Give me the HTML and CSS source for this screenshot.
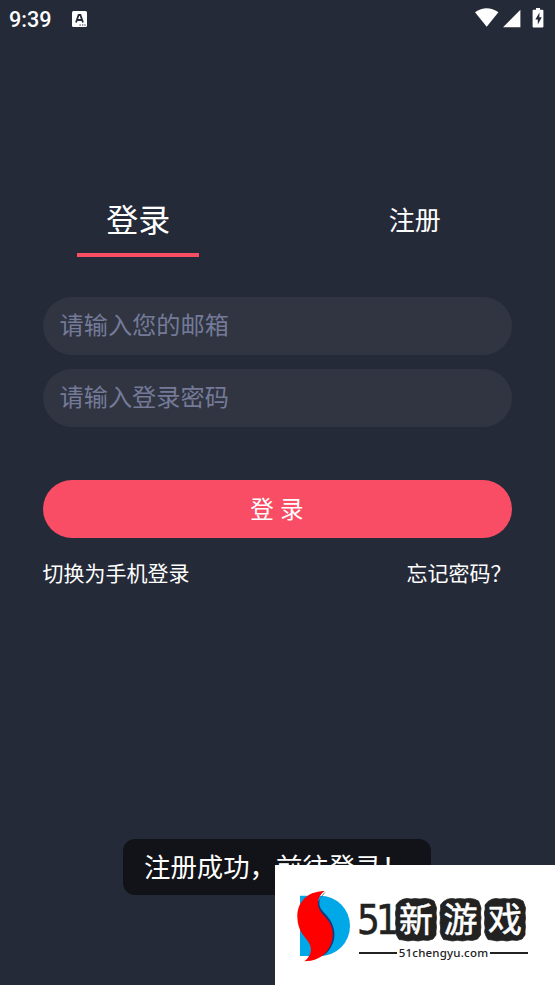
FILE: index.html
```html
<!DOCTYPE html>
<html lang="zh-CN">
<head>
<meta charset="utf-8">
<title>登录</title>
<link rel="stylesheet" href="styles.css">
</head>
<body>
<div class="screen">
  <header class="status">
    <span class="time">9:39</span>
    <svg class="ime" width="15" height="16" viewBox="0 0 15 16"><rect width="15" height="16" rx="1.5" fill="#fff"/><path d="M4 11.5 6.6 4h1.8L11 11.5M5.2 9h4.6" fill="none" stroke="#252a38" stroke-width="1.8"/><path d="M7.5 14h1.3M10 14h1.3M12.3 14h1.3" stroke="#252a38" stroke-width="1.2"/></svg>
    <svg class="signals" width="70" height="21" viewBox="0 0 70 21" fill="#fff"><path d="M0 4.2Q11.7-3.8 23.4 4.2L11.7 18.7Z"/><path d="M28 19.3 45.4 1.7v17.6Z"/><path d="M61 0h4v1.8h2.4q1 0 1 1V18.5q0 1-1 1h-8.8q-1 0-1-1V2.8q0-1 1-1H61Z"/><path d="m64.5 4.5-4.2 7h2.5v5l4-7.2h-2.5Z" fill="#252a38"/></svg>
  </header>
  <nav class="tabs">
    <a class="tab active">登录</a>
    <a class="tab">注册</a>
  </nav>
  <form class="form">
    <input class="field" type="text" placeholder="请输入您的邮箱">
    <input class="field" type="password" placeholder="请输入登录密码">
    <button class="submit" type="button">登 录</button>
    <div class="links"><a>切换为手机登录</a><a>忘记密码？</a></div>
  </form>
  <div class="toast">注册成功，前往登录！</div>
  <div class="brand">
    <svg class="mark" width="57" height="73" viewBox="15 30 171 219">
      <path d="M30 47H90A90 90.5 0 0 1 90 228H30Z" fill="#00a8e8"/>
      <path d="M108 34C82 57 82 79 104 100C136 132 144 175 118 209Q110 221 98 228L85 190 80 70Z" fill="#103b83"/>
      <path d="M104 33C46 34 21 72 22 111C23 154 44 168 56 187C69 209 62 230 43 244C99 244 127 205 128 163C128 113 84 107 84 70Q84 46 104 33Z" fill="#fe0000"/>
    </svg>
    <div class="words">
      <div class="name">
        <span class="num">51</span>
        <svg class="seals" width="132" height="54" viewBox="0 -5 132 54">
          <defs><path id="seal" d="M8 1.2 12 .5 16 1.1 20 .6 25 1.1 30 .4 35 1.2 39 3 40.5 7 41.5 10 41 15 41.5 20 41 24 41.4 29 41 33 41 37 38 41 33 42.4 28 42 23 43 18 42.2 13 43 8 42 4 41.5 2 38 .6 34 1.2 30 .5 25 1 20 .4 15 1.2 11 1 7 4 3.5Z"/></defs>
          <g fill="#222" stroke="#222" stroke-width=".8" stroke-linejoin="round"><use href="#seal"/><use href="#seal" x="44.5"/><use href="#seal" x="89"/></g>
          <g class="glyphs"><text x="21" y="34">新</text><text x="65.5" y="34">游</text><text x="110" y="34">戏</text></g>
        </svg>
      </div>
      <div class="site"><i></i><span>51chengyu.com</span><i></i></div>
    </div>
  </div>
</div>
</body>
</html>
```
FILE: styles.css
```css
* { box-sizing: border-box; }
body {
  margin: 0;
  background: #252a38;
  color: #fff;
  font-family: "Noto Sans CJK SC", sans-serif;
}
.screen {
  position: relative;
  height: 985px;
  overflow: hidden;
}
.status {
  display: flex;
  height: 38px;
  padding: 8px 10px 0 9px;
}
.time {
  width: 63px;
  font: 500 21.6px/23px Roboto, sans-serif;
}
.ime { margin-top: 3px; }
.signals { margin-left: auto; }
.tabs {
  display: grid;
  grid-template-columns: 1fr 1fr;
  height: 219px;
  padding-top: 144px;
  margin-right: 2px;
}
.tab {
  width: 122px;
  height: 75px;
  margin: 0 auto;
  text-align: center;
  font-size: 26px;
  line-height: 74px;
}
.active {
  font-size: 32px;
  line-height: 72px;
  border-bottom: 4px solid #f84d65;
}
.form {
  display: flex;
  flex-direction: column;
  padding: 40px 43.5px 0 42.5px;
}
.field, .submit {
  height: 58px;
  border: 0;
  border-radius: 29px;
  font-family: inherit;
}
.field {
  margin-bottom: 14px;
  padding: 0 17px 5px;
  background: #303541;
  font-size: 24.2px;
}
.field::placeholder { color: #747a98; opacity: 1; }
.submit {
  margin-top: 39px;
  padding: 0 0 2px;
  background: #f84d65;
  color: #fff;
  font-size: 23.5px;
  word-spacing: 1px;
}
.links {
  display: flex;
  justify-content: space-between;
  padding-top: 18px;
  font-size: 21px;
  line-height: 32px;
}
.toast {
  position: absolute;
  left: 123px;
  top: 839px;
  width: 308px;
  height: 56px;
  padding-left: 21px;
  border-radius: 12px;
  background: #121318;
  font-size: 26.4px;
  line-height: 54px;
  white-space: nowrap;
}
.brand {
  position: absolute;
  right: 0;
  bottom: 0;
  display: flex;
  width: 280px;
  height: 120px;
  padding: 25px 0 0 20px;
  background: #fff;
  color: #222;
}
.words { width: 169px; margin: 8px 0 0 7px; }
.name {
  display: flex;
  height: 43px;
}
.num {
  flex: none;
  width: 37px;
  margin-left: -2px;
  font: 40px/45px "DejaVu Sans Condensed", "DejaVu Sans", sans-serif;
  font-stretch: condensed;
  letter-spacing: -4px;
  -webkit-text-stroke: .5px #222;
}
.seals { flex: none; margin: -5px 0 0 1px; }
.glyphs {
  fill: #fff;
  stroke: #fff;
  stroke-width: .6px;
  stroke-linejoin: round;
  text-anchor: middle;
  font-size: 34px;
  font-weight: 400;
}
.site {
  display: flex;
  align-items: center;
  justify-content: space-between;
  height: 24px;
  font: 500 11.5px/24px "Noto Sans", sans-serif;
  letter-spacing: .2px;
}
.site i { width: 38px; height: 2px; background: #222; }
```
